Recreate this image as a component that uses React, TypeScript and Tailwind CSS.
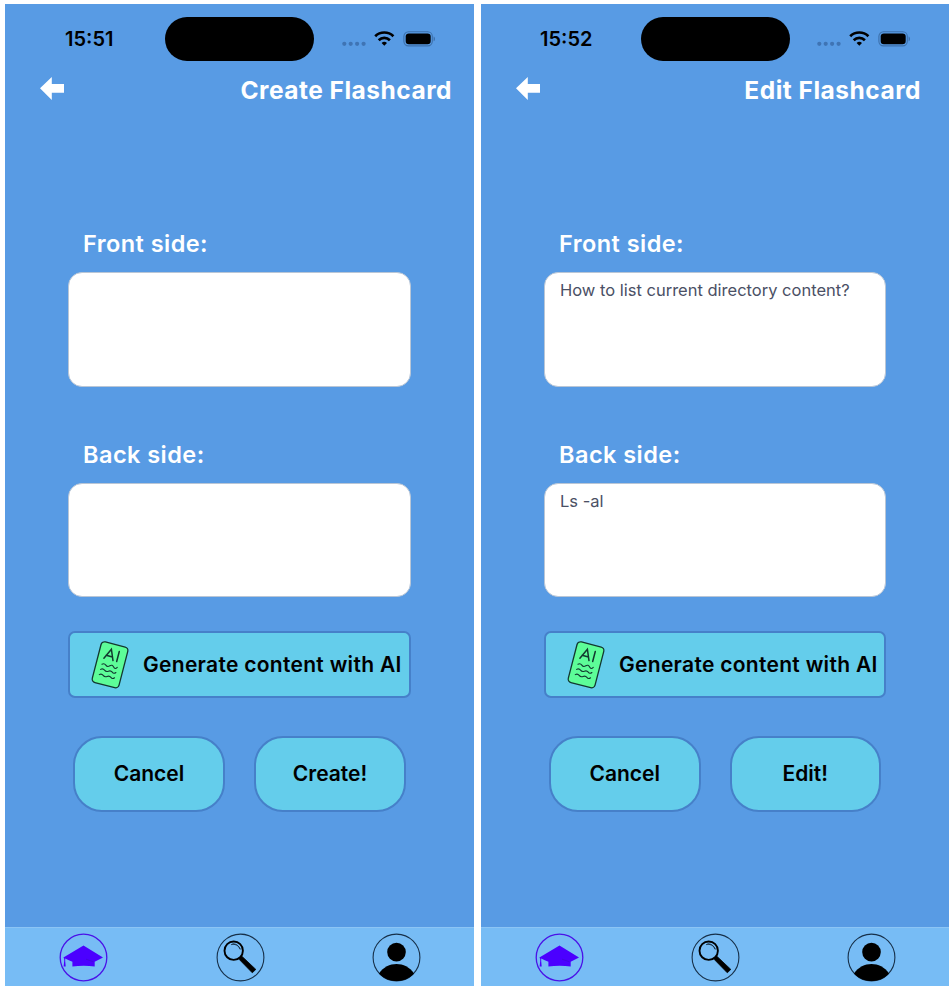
type ScreenProps = {
  time: string
  title: string
  front?: string
  back?: string
  submit: string
  variant: 'create' | 'edit'
}

function BackArrow() {
  return (
    <svg width="24" height="23" viewBox="0 0 24 23" className="shrink-0">
      <path d="M0 11.3 11.8 0v7H24v8.8H11.8V23Z" fill="#fff" />
    </svg>
  )
}

function StatusIcons() {
  return (
    <svg width="94" height="16" viewBox="0 0 94 16" className="shrink-0">
      <g fill="#3f74b4">
        <circle cx="3.3" cy="12.8" r="2.1" />
        <circle cx="9.7" cy="12.8" r="2.1" />
        <circle cx="16.1" cy="12.8" r="2.1" />
        <circle cx="22.6" cy="12.8" r="2.1" />
      </g>
      <g fill="none" stroke="#000" strokeWidth="2.7">
        <path d="M34.2 5.2a13 13 0 0 1 18.2 0" />
        <path d="M37.7 9.2a8 8 0 0 1 11.2 0" />
      </g>
      <path d="M40.6 11.9a4.2 4.2 0 0 1 5.4 0L43.3 14.8Z" fill="#000" />
      <rect x="62.9" y="0.7" width="28.4" height="14.2" rx="4.6" fill="none" stroke="#3c70ab" strokeWidth="1.1" />
      <rect x="64.7" y="2.4" width="25" height="10.9" rx="3.2" fill="#000" />
      <path d="M92.6 5.6c1.8.7 1.8 3.9 0 4.6Z" fill="#3c70ab" />
    </svg>
  )
}

function AiCard() {
  return (
    <svg width="40" height="50" viewBox="0 0 40 50" className="shrink-0">
      <g transform="rotate(14.5 20 25)" stroke="#12382f" fill="none" strokeLinecap="round">
        <rect x="6.2" y="3.8" width="27.6" height="42" rx="3.6" fill="#5dfd98" strokeWidth="1.3" />
        <path d="m12.4 20 5-10.6L21.8 20M13.8 16.6h6.6M25.6 9.6V20" strokeWidth="1.5" />
        <g strokeWidth="1.1">
          <path d="M12 26.2q2-1.8 4 0t4-.4 4 .2 3.6-.6" />
          <path d="M12 31.6q2-1.8 4-.2t4 0 4 0 3.6-.6" />
          <path d="M12 37q2-1.8 4-.2t4 0 4 0 3.6-.6" />
        </g>
      </g>
    </svg>
  )
}

function CapIcon() {
  return (
    <svg width="49" height="49" viewBox="0 0 49 49">
      <circle cx="24.5" cy="24.5" r="23.3" fill="none" stroke="#4a12e8" strokeWidth="1.3" />
      <path d="M24.5 12.6 44 24.6l-8.3 4.2v4.8c-7-1.2-15-1.2-22.3 0v-4.8l-3.6-1.6-3.6-1.6v2.6l.5 5.2H4.6l.6-5.2v-2.4l-.8-1.2Z" fill="#4b00ff" />
      <path d="m27 26.2 7.5 2.6" stroke="#3a0bc9" strokeWidth=".6" />
    </svg>
  )
}

function SearchIcon() {
  return (
    <svg width="49" height="49" viewBox="0 0 49 49">
      <circle cx="24.5" cy="24.5" r="23.4" fill="none" stroke="#173049" strokeWidth="1.1" />
      <circle cx="17.7" cy="17.7" r="9.2" fill="none" stroke="#000" strokeWidth="1.9" />
      <path d="M15 11.6q6.4-1.4 9.2 4.4M16.5 10.6q6 .4 7.8 6" fill="none" stroke="#10263a" strokeWidth=".8" />
      <path d="m23.4 25 2.2-2 14.2 13.4-3.5 3.4-12.7-13Z" fill="#000" stroke="#000" strokeWidth=".8" />
    </svg>
  )
}

function ProfileIcon() {
  return (
    <svg width="49" height="49" viewBox="0 0 49 49">
      <circle cx="24.5" cy="24.5" r="23.4" fill="none" stroke="#173049" strokeWidth="1.1" />
      <circle cx="24.5" cy="19.1" r="9.3" fill="#000" />
      <path d="M7 40.4C15.5 27.8 33.5 27.8 42 40.4 33.5 50.4 15.500 50.4 7 40.4Z" fill="#000" />
    </svg>
  )
}

function Field({ label, value }: { label: string; value?: string }) {
  return (
    <section className="h-[210.500px] px-[63px]">
      <h2 className="h-[43px] pl-[15px] text-[23.5px] leading-[30px] font-semibold tracking-[0.45px] text-white">
        {label}
      </h2>
      <div className="h-[114.500px] rounded-[14px] border border-[#b9c6d6] bg-white pt-[5px] pl-[15px] text-[16.5px] leading-6 text-[#4b5065]">
        {value}
      </div>
    </section>
  )
}

const actionClass =
  'flex h-[76px] flex-1 items-center justify-center rounded-[29px] border-2 border-[#4680c9] bg-[#64cdeb] text-[21px] leading-[30px] font-semibold text-black'

function Screen({ time, title, front, back, submit, variant }: ScreenProps) {
  const edit = variant === 'edit'
  return (
    <main className={`flex h-[982px] flex-col bg-[#589be4] ${edit ? 'w-[468px]' : 'w-[469px]'}`}>
      <div className="flex h-[70px] items-center">
        <span className={`w-[160px] text-[20px] leading-[30px] font-semibold text-black ${edit ? 'pl-[59px]' : 'pl-[60px]'}`}>
          {time}
        </span>
        <span className={`h-[44px] w-[149px] rounded-full bg-black ${edit ? '-ml-[0.500px]' : ''}`} />
        <span className={edit ? 'ml-[26.500px]' : 'ml-[27px]'}>
          <StatusIcons />
        </span>
      </div>
      <header className={`flex h-[40px] items-start justify-between pl-[35px] ${edit ? 'pr-[28px]' : 'pr-[22px]'}`}>
        <div className="pt-[3px]">
          <BackArrow />
        </div>
        <h1 className="text-[24.5px] leading-[32px] font-bold tracking-[0.5px] whitespace-nowrap text-white">{title}</h1>
      </header>
      <div className="pt-[115px]">
        <Field label="Front side:" value={front} />
        <Field label="Back side:" value={back} />
      </div>
      <div className="-mt-[19px] px-[63px]">
        <button className="flex h-[67px] w-full items-center rounded-[7px] border-2 border-[#4680c9] bg-[#64cdeb] pl-[20px] text-[21px] leading-[30px] font-semibold whitespace-nowrap text-black">
          <AiCard />
          <span className="ml-[13px] tracking-[0.3px]">Generate content with AI</span>
        </button>
      </div>
      <div className="mt-[38px] flex gap-[29px] px-[68px]">
        <button className={actionClass}>Cancel</button>
        <button className={actionClass}>{submit}</button>
      </div>
      <nav className={`mt-auto flex h-[59px] items-center justify-between border-t border-[#8cc5f5] bg-[#77bcf5] pl-[54px] ${edit ? 'pr-[53px]' : 'pr-[53px]'}`}>
        <CapIcon />
        <SearchIcon />
        <ProfileIcon />
      </nav>
    </main>
  )
}

export default function App() {
  return (
    <div className="flex h-[988px] w-[951px] gap-[7px] overflow-hidden bg-white pt-1 pl-[5px] font-['Inter','Liberation_Sans',sans-serif]">
      <Screen time="15:51" title="Create Flashcard" submit="Create!" variant="create" />
      <Screen
        time="15:52"
        title="Edit Flashcard"
        front="How to list current directory content?"
        back="Ls -al"
        submit="Edit!"
        variant="edit"
      />
    </div>
  )
}
